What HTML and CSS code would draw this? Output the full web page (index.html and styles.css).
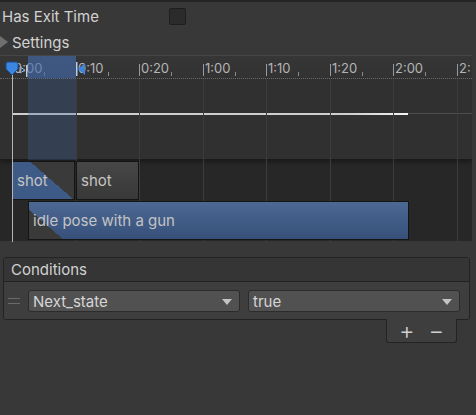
FILE: index.html
```html
<!DOCTYPE html>
<html lang="en">
<head>
<meta charset="UTF-8" />
<title>Transition Inspector</title>
<link rel="stylesheet" href="styles.css">
</head>
<body>
<div class="inspector">
  <div class="field">
    <span class="field-label">Has Exit Time</span>
    <span class="checkbox"></span>
  </div>
  <div class="foldout">
    <span class="fold-arrow"></span>
    <span>Settings</span>
  </div>

  <div class="timeline">
    <div class="ruler">
      <span class="tick" style="left:12px"></span><span class="label" style="left:14px">0:00</span><span class="minor" style="left:44px"></span>
      <span class="tick" style="left:76px"></span><span class="label" style="left:78px">0:10</span><span class="minor" style="left:108px"></span>
      <span class="tick" style="left:139px"></span><span class="label" style="left:141px">0:20</span><span class="minor" style="left:171px"></span>
      <span class="tick" style="left:203px"></span><span class="label" style="left:205px">1:00</span><span class="minor" style="left:235px"></span>
      <span class="tick" style="left:266px"></span><span class="label" style="left:268px">1:10</span><span class="minor" style="left:298px"></span>
      <span class="tick" style="left:330px"></span><span class="label" style="left:332px">1:20</span><span class="minor" style="left:362px"></span>
      <span class="tick" style="left:393px"></span><span class="label" style="left:395px">2:00</span><span class="minor" style="left:425px"></span>
      <span class="tick" style="left:457px"></span><span class="label" style="left:459px">2:</span>
    </div>
    <div class="curve">
      <div class="weight"></div>
      <div class="weight-rest"></div>
    </div>
    <div class="tracks">
      <div class="clip clip-from">shot</div>
      <div class="clip clip-next">shot</div>
      <div class="clip clip-to">idle pose with a gun</div>
    </div>

    <div class="grid" style="left:76px"></div>
    <div class="grid" style="left:139px"></div>
    <div class="grid" style="left:203px"></div>
    <div class="grid" style="left:266px"></div>
    <div class="grid" style="left:330px"></div>
    <div class="grid" style="left:393px"></div>
    <div class="grid" style="left:457px"></div>

    <div class="blend-region"></div>
    <div class="playhead"></div>
    <svg class="playhead-knob" width="28" height="20" viewBox="0 0 28 20">
      <path d="M1 3 Q1 1 3 1 H11 Q13 1 13 3 V8 L7 14 L1 8 Z" fill="#3b86e0" stroke="#1d4e90" stroke-width="1"/>
      <path d="M15 6 L20 9 L15 12 Z" fill="none" stroke="#8fb4e4" stroke-width="1"/>
      <rect x="21" y="4" width="1.5" height="12" fill="#b9cbe4"/>
    </svg>
    <svg class="end-knob" width="12" height="18" viewBox="0 0 12 18">
      <rect x="1" y="2" width="1.5" height="14" fill="#b9cbe4"/>
      <path d="M10 3 L3 9 L10 15 Z" fill="#3b86e0"/>
    </svg>
  </div>

  <div class="conditions">
    <div class="cond-header">Conditions</div>
    <div class="cond-body">
      <span class="handle"></span>
      <div class="dropdown">Next_state</div>
      <div class="dropdown">true</div>
    </div>
  </div>
  <div class="cond-footer">
    <span class="btn">+</span>
    <span class="btn">&minus;</span>
  </div>
</div>
</body>
</html>
```

FILE: styles.css
```css
body { margin:0; background:#383838; font-family:Inter, "Noto Sans", sans-serif; color:#d2d2d2; font-size:15px; }
.inspector { border-top:2px solid #242424; height:413px; overflow:hidden; }

.field { display:flex; align-items:center; height:28px; padding-left:2px; }
.field-label { width:167px; }
.checkbox { width:15px; height:15px; background:#2b2b2b; border:1px solid #1e1e1e; border-radius:2px; }

.foldout { display:flex; align-items:center; gap:4px; height:24px; }
.fold-arrow { width:0; height:0; border-left:8px solid #6f6f6f; border-top:6px solid transparent; border-bottom:6px solid transparent; }

.timeline { position:relative; width:472px; height:186px; margin-top:1px; overflow:hidden; border-top:1px solid #464646; }
.ruler { position:relative; height:22px; background:linear-gradient(#363636, #323232); border-bottom:1px dotted #6a6a6a; font-size:13px; color:#b4b4b4; }
.ruler .tick { position:absolute; bottom:2px; width:1px; height:12px; background:#9a9a9a; }
.ruler .minor { position:absolute; bottom:2px; width:1px; height:4px; background:#8a8a8a; }
.ruler .label { position:absolute; top:4px; }

.curve { position:relative; height:80px; background:#303030; box-shadow:0 3px 4px rgba(0,0,0,0.35); z-index:1; }
.weight { position:absolute; left:12px; top:34px; width:396px; height:2px; background:linear-gradient(90deg, #cfcfcf 85%, #f4f4f4); }
.weight-rest { position:absolute; left:408px; top:34px; width:64px; height:1px; background:#4e4e4e; }

.tracks { position:relative; height:82px; background:#272727; }
.clip { position:absolute; height:39px; box-sizing:border-box; border:1px solid #151515; display:flex; align-items:center; padding-left:4px; color:#c4c4c4; font-size:15px; }
.clip-from { left:12px; top:2px; width:63px; background:linear-gradient(41deg, #3e5a86 58%, #3a3a3a 58%); z-index:2; }
.clip-next { left:76px; top:2px; width:63px; background:linear-gradient(#474747, #383838); z-index:2; }
.clip-to { left:28px; top:42px; width:381px; background:linear-gradient(221deg, transparent 92%, #3a3a3a 92%), linear-gradient(#4c6993, #36507a); z-index:2; }

.grid { position:absolute; top:23px; bottom:0; width:1px; background:#3b3b3b; z-index:1; }

.blend-region { position:absolute; left:28px; top:0; width:48px; height:104px; background:linear-gradient(rgba(66,108,175,0.62) 22px, rgba(62,100,160,0.3) 22px); z-index:2; }
.playhead { position:absolute; left:12px; top:14px; width:1px; height:172px; background:#b5b5b5; z-index:3; }
.playhead-knob { position:absolute; left:5px; top:5px; z-index:4; }
.end-knob { position:absolute; left:75px; top:4px; z-index:4; }

.conditions { margin:15px 6px 0 3px; border:1px solid #232323; border-radius:3px; overflow:hidden; }
.cond-header { height:23px; line-height:24px; padding-left:7px; background:#353535; border-bottom:1px solid #232323; }
.cond-body { display:flex; align-items:center; gap:8px; height:37px; padding:0 9px 0 0; background:#3e3e3e; }
.handle { width:12px; height:4px; border-top:1px solid #6a6a6a; border-bottom:1px solid #6a6a6a; margin-left:4px; }
.dropdown { flex:1; height:22px; line-height:21px; box-sizing:border-box; padding-left:4px; background:#515151; border:1px solid #2c2c2c; border-radius:3px; position:relative; color:#d6d6d6; }
.dropdown::after { content:""; position:absolute; right:7px; top:8px; border-top:6px solid #c4c4c4; border-left:5px solid transparent; border-right:5px solid transparent; }

.cond-footer { display:flex; justify-content:space-around; align-items:center; width:71px; height:24px; margin-left:386px; margin-top:-1px; background:#3e3e3e; border:1px solid #232323; border-top:none; border-radius:0 0 3px 3px; font-size:24px; font-weight:300; color:#d0d0d0; padding:0 5px; box-sizing:border-box; }
.btn { width:24px; text-align:center; line-height:22px; }
```
